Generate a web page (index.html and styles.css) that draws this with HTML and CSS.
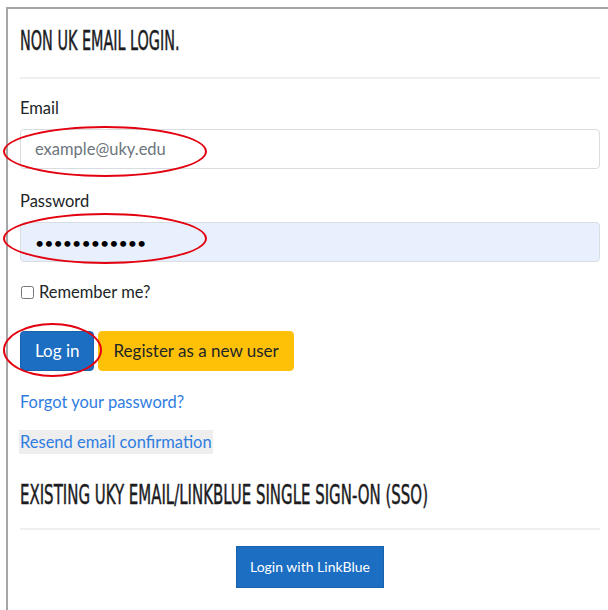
FILE: index.html
```html
<!DOCTYPE html>
<html lang="en">
<head>
<meta charset="utf-8">
<title>Log in</title>
<link rel="stylesheet" href="styles.css">
</head>
<body>
<div class="page">
  <section class="panel">
    <h2 class="section-title"><span>Non UK Email Login.</span></h2>
    <hr class="divider">
    <form class="login-form">
      <div class="field">
        <label class="field-label" for="email">Email</label>
        <input class="field-input" id="email" type="email" placeholder="example@uky.edu">
      </div>
      <div class="field">
        <label class="field-label" for="password">Password</label>
        <input class="field-input field-input--filled" id="password" type="password" value="passwordtext">
      </div>
      <label class="remember">
        <input class="remember-box" type="checkbox">
        <span>Remember me?</span>
      </label>
      <div class="actions">
        <button class="btn btn-primary" type="button">Log in</button>
        <button class="btn btn-warning" type="button">Register as a new user</button>
      </div>
      <p class="link-row"><a href="#" class="link">Forgot your password?</a></p>
      <p class="link-row"><a href="#" class="link link--shaded">Resend email confirmation</a></p>
    </form>
    <h2 class="section-title section-title--sso"><span class="sso-title">Existing UKY Email/LinkBlue Single Sign-On (SSO)</span></h2>
    <hr class="divider divider--sso">
    <div class="sso">
      <button class="btn-sso" type="button">Login with LinkBlue</button>
    </div>
  </section>

  <!-- red hand-drawn highlight rings -->
  <span class="ring ring--email"></span>
  <span class="ring ring--password"></span>
  <span class="ring ring--login"></span>
</div>
</body>
</html>
```
FILE: styles.css
```css
* {
  box-sizing: border-box;
}

html, body {
  margin: 0;
  padding: 0;
  background: #ffffff;
}

body {
  font-family: Lato, "Open Sans", sans-serif;
  font-size: 16.5px;
  line-height: 24px;
  color: #212529;
  width: 608px;
  height: 610px;
  overflow: hidden;
}

.page {
  position: relative;
  padding: 7px 0 0 6px;
  height: 610px;
  overflow: hidden;
}

.panel {
  border-top: 2px solid #a6a6a6;
  border-left: 2px solid #a6a6a6;
  padding: 0 8px 0 12px;
  height: 603px;
}

.section-title {
  margin: 17px 0 0;
  font-family: "Liberation Sans Narrow", "DejaVu Sans Condensed", sans-serif;
  font-weight: 400;
  font-size: 26px;
  line-height: 30px;
  height: 30px;
  text-transform: uppercase;
  color: #1c1c1f;
  -webkit-text-stroke: 0.45px #1c1c1f;
  white-space: nowrap;
  overflow: hidden;
}

.section-title span {
  display: inline-block;
  transform: scaleX(0.615);
  transform-origin: 0 50%;
}

.section-title .sso-title {
  transform: scaleX(0.64);
}

.section-title--sso {
  margin-top: 26px;
}

.divider {
  margin: 21px 0 0;
  border: 0;
  border-top: 2px solid #efefef;
  height: 0;
}

.divider--sso {
  margin-top: 18px;
}

.login-form {
  margin: 0;
  padding-top: 17px;
}

.field {
  margin-bottom: 20px;
}

.field-label {
  display: block;
  margin-bottom: 9px;
  color: #212529;
}

.field-input {
  display: block;
  width: 100%;
  height: 40px;
  padding: 7px 14px;
  font-family: Lato, sans-serif;
  font-size: 16.5px;
  line-height: 24px;
  color: #212529;
  background: #ffffff;
  border: 1px solid #d9dde1;
  border-radius: 4px;
  outline: none;
}

.field-input::placeholder {
  color: #6c757d;
}

.field-input--filled {
  background: #e8f0fe;
  color: #000000;
  font-size: 16px;
  letter-spacing: 0;
}

.remember {
  display: flex;
  align-items: center;
  gap: 5px;
  margin-top: -2px;
  height: 24px;
}

.remember-box {
  margin: 0 0 0 1px;
  width: 13px;
  height: 13px;
}

.actions {
  display: flex;
  gap: 4px;
  margin-top: 27px;
}

.btn {
  font-family: Lato, sans-serif;
  font-size: 17px;
  line-height: 24px;
  height: 40px;
  padding: 7px 14px;
  border-radius: 4px;
  border: 1px solid transparent;
  cursor: pointer;
}

.btn-primary {
  background: #1b6ec2;
  border-color: #1861ac;
  color: #ffffff;
}

.btn-warning {
  background: #ffc107;
  border-color: #ffc107;
  color: #212529;
}

.link-row {
  margin: 19px 0 0;
}

.link-row + .link-row {
  margin-top: 16px;
}

.link {
  color: #2f7de0;
  text-decoration: none;
}

.link--shaded {
  display: inline-block;
  background: #eeeeee;
  padding: 0 1px;
  margin-left: -1px;
}

.sso {
  display: flex;
  justify-content: center;
  padding-top: 16px;
}

.btn-sso {
  font-family: Lato, sans-serif;
  font-size: 14px;
  line-height: 20px;
  height: 42px;
  padding: 10px 13px;
  background: #1b6ec2;
  border: 1px solid #1861ac;
  border-radius: 0;
  color: #ffffff;
}

.ring {
  position: absolute;
  border: 2.5px solid #e3000f;
  border-radius: 50%;
  pointer-events: none;
}

.ring--email {
  left: 3px;
  top: 126px;
  width: 204px;
  height: 51px;
}

.ring--password {
  left: 3px;
  top: 213px;
  width: 204px;
  height: 51px;
}

.ring--login {
  left: 3px;
  top: 323px;
  width: 99px;
  height: 54px;
}
```
